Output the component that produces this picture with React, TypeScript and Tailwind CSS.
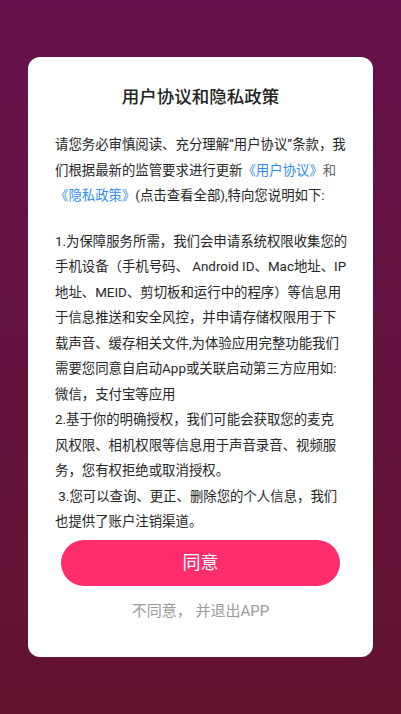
export default function App() {
  return (
    <div
      className="min-h-[714px] w-full bg-gradient-to-b from-[#66114b] to-[#63132f] flex justify-center items-start pt-[57px]"
      style={{ fontFamily: 'Roboto, "Noto Sans CJK SC", sans-serif' }}
    >
      <div className="w-[345px] bg-white rounded-[12px] flex flex-col px-[27px] pt-[28px] pb-[36px]">
        {/* title */}
        <h1 className="text-center text-[17.5px] leading-[24px] font-medium text-[#222]">
          用户协议和隐私政策
        </h1>

        {/* body */}
        <div className="mt-[23px] text-[13.4px] leading-[25.5px] text-[#262626] whitespace-nowrap -mr-[6px]">
          <p>
            请您务必审慎阅读、充分理解“用户协议”条款，我
            <br />
            们根据最新的监管要求进行更新<span className="text-[#2f8df2]">《用户协议》</span>
            <span className="text-[#666]">和</span>
            <br />
            <span className="text-[#2f8df2]">《隐私政策》</span>(点击查看全部),特向您说明如下:
          </p>
          <p className="mt-[20px]">
            1.为保障服务所需，我们会申请系统权限收集您的
            <br />
            手机设备（手机号码、 Android ID、Mac地址、IP
            <br />
            地址、MEID、剪切板和运行中的程序）等信息用
            <br />
            于信息推送和安全风控，并申请存储权限用于下
            <br />
            载声音、缓存相关文件,为体验应用完整功能我们
            <br />
            需要您同意自启动App或关联启动第三方应用如:
            <br />
            微信，支付宝等应用
          </p>
          <p>
            2.基于你的明确授权，我们可能会获取您的麦克
            <br />
            风权限、相机权限等信息用于声音录音、视频服
            <br />
            务，您有权拒绝或取消授权。
          </p>
          <p>
            &nbsp;3.您可以查询、更正、删除您的个人信息，我们
            <br />
            也提供了账户注销渠道。
          </p>
        </div>

        {/* actions */}
        <button className="mt-[5px] mx-[6px] h-[46px] rounded-full bg-[#ff2d6b] text-white text-[18px] flex items-center justify-center">
          同意
        </button>
        <button className="mt-[15px] h-[20px] text-[15px] leading-[20px] text-[#9a9a9a] text-center">
          不同意， 并退出APP
        </button>
      </div>
    </div>
  );
}
